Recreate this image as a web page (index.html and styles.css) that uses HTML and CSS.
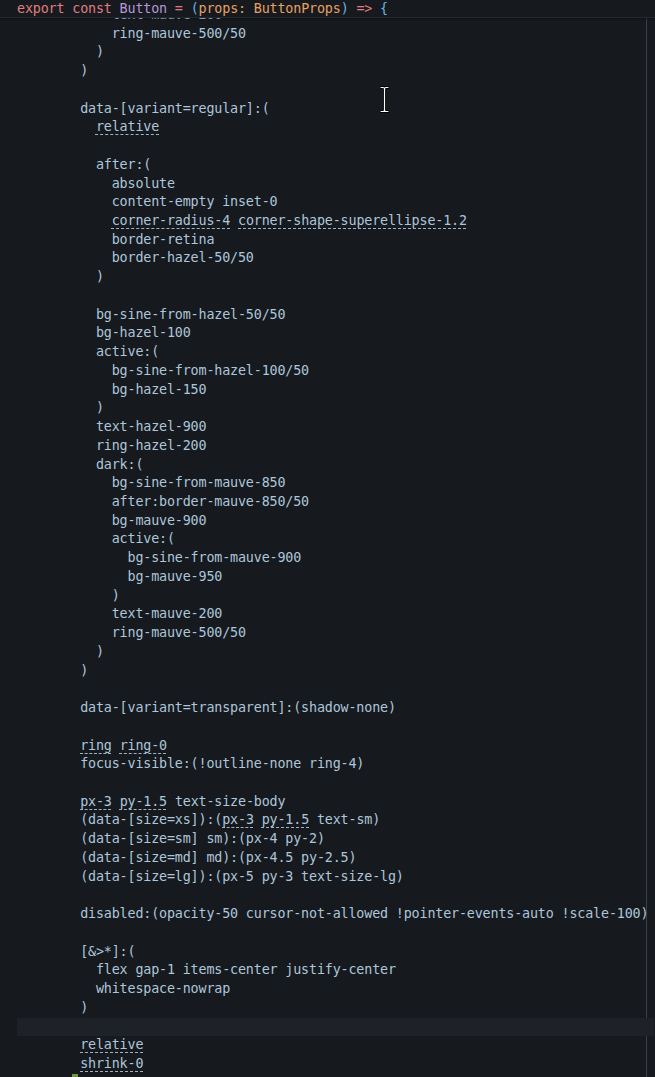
FILE: index.html
```html
<!DOCTYPE html>
<html>
<head>
<meta charset="utf-8">
<link rel="stylesheet" href="styles.css">
</head>
<body>
<div class="editor">
  <div class="sticky"><span class="kw">export const </span><span class="fn">Button</span><span class="kw"> = </span><span class="br">(</span><span class="pr">props: ButtonProps</span><span class="br">)</span><span class="kw"> =&gt; </span><span class="br">{</span></div>
  <div class="code">
<div class="ln hidden">            text-mauve-200</div>
<div class="ln">            ring-mauve-500/50</div>
<div class="ln">          )</div>
<div class="ln">        )</div>
<div class="ln"> </div>
<div class="ln">        data-[variant=regular]:(</div>
<div class="ln">          <span class="u">relative</span></div>
<div class="ln"> </div>
<div class="ln">          after:(</div>
<div class="ln">            absolute</div>
<div class="ln">            content-empty inset-0</div>
<div class="ln">            <span class="u">corner-radius-4</span> <span class="u">corner-shape-superellipse-1.2</span></div>
<div class="ln">            border-retina</div>
<div class="ln">            border-hazel-50/50</div>
<div class="ln">          )</div>
<div class="ln"> </div>
<div class="ln">          bg-sine-from-hazel-50/50</div>
<div class="ln">          bg-hazel-100</div>
<div class="ln">          active:(</div>
<div class="ln">            bg-sine-from-hazel-100/50</div>
<div class="ln">            bg-hazel-150</div>
<div class="ln">          )</div>
<div class="ln">          text-hazel-900</div>
<div class="ln">          ring-hazel-200</div>
<div class="ln">          dark:(</div>
<div class="ln">            bg-sine-from-mauve-850</div>
<div class="ln">            after:border-mauve-850/50</div>
<div class="ln">            bg-mauve-900</div>
<div class="ln">            active:(</div>
<div class="ln">              bg-sine-from-mauve-900</div>
<div class="ln">              bg-mauve-950</div>
<div class="ln">            )</div>
<div class="ln">            text-mauve-200</div>
<div class="ln">            ring-mauve-500/50</div>
<div class="ln">          )</div>
<div class="ln">        )</div>
<div class="ln"> </div>
<div class="ln">        data-[variant=transparent]:(shadow-none)</div>
<div class="ln"> </div>
<div class="ln">        <span class="u">ring</span> <span class="u">ring-0</span></div>
<div class="ln">        focus-visible:(!outline-none ring-4)</div>
<div class="ln"> </div>
<div class="ln">        <span class="u">px-3</span> <span class="u">py-1.5</span> text-size-body</div>
<div class="ln">        (data-[size=xs]):(<span class="u">px-3</span> <span class="u">py-1.5</span> text-sm)</div>
<div class="ln">        (data-[size=sm] sm):(px-4 py-2)</div>
<div class="ln">        (data-[size=md] md):(px-4.5 py-2.5)</div>
<div class="ln">        (data-[size=lg]):(px-5 py-3 text-size-lg)</div>
<div class="ln"> </div>
<div class="ln">        disabled:(opacity-50 cursor-not-allowed !pointer-events-auto !scale-100)</div>
<div class="ln"> </div>
<div class="ln">        [&amp;&gt;*]:(</div>
<div class="ln">          flex gap-1 items-center justify-center</div>
<div class="ln">          whitespace-nowrap</div>
<div class="ln">        )</div>
<div class="ln current"> </div>
<div class="ln">        <span class="u">relative</span></div>
<div class="ln">        <span class="u">shrink-0</span></div>
<div class="ln"><span class="mark"></span> </div>
  </div>
  <svg class="ibeam" width="9" height="27" viewBox="0 0 9 27"><path d="M1 1.5 H3 Q4.5 1.5 4.5 3 Q4.5 1.5 6 1.5 H8 M4.5 3 V24 M1 25.5 H3 Q4.5 25.5 4.5 24 Q4.5 25.5 6 25.5 H8" fill="none" stroke="#000" stroke-width="3" stroke-linecap="round"/><path d="M1 1.5 H3 Q4.5 1.5 4.5 3 Q4.5 1.5 6 1.5 H8 M4.5 3 V24 M1 25.5 H3 Q4.5 25.5 4.5 24 Q4.5 25.5 6 25.5 H8" fill="none" stroke="#fff" stroke-width="1.2" stroke-linecap="round"/></svg>
</div>
</body>
</html>
```
FILE: styles.css
```css
html, body {
  margin: 0;
  padding: 0;
  background: #16191e;
}
.editor {
  position: relative;
  width: 655px;
  height: 1077px;
  overflow: hidden;
  background: #16191e;
  font-family: "DejaVu Sans Mono", "Liberation Mono", monospace;
  font-size: 13.4px;
  letter-spacing: -0.17px;
  color: #adc6da;
}
.code {
  padding-top: 5.9px;
  width: 647px;
  min-height: 1077px;
  border-right: 1px solid #3a3f47;
  box-sizing: border-box;
}
.ln {
  height: 18.74px;
  line-height: 18.74px;
  white-space: pre;
  padding-left: 17px;
  position: relative;
}
.ln.current {
  background: linear-gradient(to right, transparent 17px, #1e2228 17px);
  margin-right: -8px;
}
.u {
  text-decoration: underline dashed;
  text-decoration-thickness: 1px;
  text-underline-offset: 3px;
  text-decoration-color: #9bb3c6;
}
.sticky {
  position: absolute;
  top: 0;
  left: 0;
  right: 0;
  height: 17px;
  line-height: 17px;
  padding-left: 17px;
  white-space: pre;
  background: #16191e;
  border-bottom: 1px solid #24282f;
  box-shadow: 0 1px 2px rgba(0,0,0,0.35);
  z-index: 2;
}
.kw { color: #e27d7f; }
.fn { color: #b597d9; }
.br { color: #6bb3e5; }
.pr { color: #e8a062; }
.mark {
  position: absolute;
  left: 72px;
  top: 0;
  width: 6px;
  height: 4px;
  background: #6f9a3a;
}
.ibeam {
  position: absolute;
  left: 380px;
  top: 86px;
  z-index: 3;
}
```
